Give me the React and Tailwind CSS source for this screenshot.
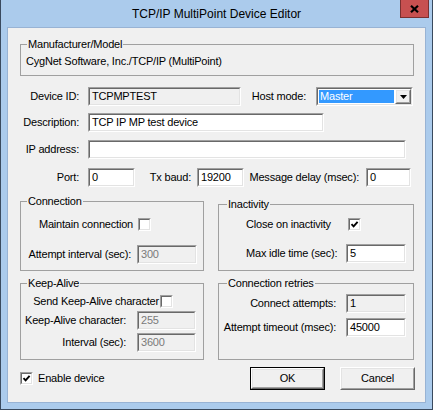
import React from 'react';

function Sunken({ className = '', bg = 'bg-white', children }) {
  return (
    <div className={`border border-t-[#a0a0a0] border-l-[#a0a0a0] border-b-white border-r-white ${className}`}>
      <div className={`h-full border border-t-[#696969] border-l-[#696969] border-b-[#e3e3e3] border-r-[#e3e3e3] ${bg}`}>
        {children}
      </div>
    </div>
  );
}

function Edit({ className = '', value = '', variant = 'normal' }) {
  const bg = variant === 'normal' ? 'bg-white' : 'bg-[#f0f0f0]';
  const color = variant === 'disabled' ? 'text-[#7a7a7a]' : 'text-black';
  return (
    <Sunken className={`h-[19px] ${className}`} bg={bg}>
      <div className={`h-full flex items-center pl-[2px] whitespace-nowrap ${color}`}>{value}</div>
    </Sunken>
  );
}

function Check({ checked = false }) {
  return (
    <Sunken className="w-[13px] h-[13px] shrink-0">
      {checked && (
        <svg width="9" height="9" viewBox="0 0 9 9" className="block">
          <path d="M1.5 4.2 L3.6 6.4 L7.6 1.8" fill="none" stroke="#000" strokeWidth="1.9" />
        </svg>
      )}
    </Sunken>
  );
}

function Raised({ className = '', children }) {
  return (
    <div className={`border border-t-white border-l-white border-b-[#696969] border-r-[#696969] ${className}`}>
      <div className="h-full border border-t-[#e3e3e3] border-l-[#e3e3e3] border-b-[#a0a0a0] border-r-[#a0a0a0] bg-[#f0f0f0] flex items-center justify-center">
        {children}
      </div>
    </div>
  );
}

function Button({ isDefault, className = '', children }) {
  if (isDefault) {
    return (
      <div className={`w-[75px] h-[23px] border border-black ${className}`}>
        <Raised className="h-full">{children}</Raised>
      </div>
    );
  }
  return <Raised className={`w-[75px] h-[23px] ${className}`}>{children}</Raised>;
}

function Group({ title, className = '', labelClass = 'left-[6px]', children }) {
  return (
    <div className={`relative border border-[#a0a0a0] ${className}`}>
      <span className={`absolute -top-[7px] px-[1px] bg-[#f0f0f0] whitespace-nowrap ${labelClass}`}>{title}</span>
      {children}
    </div>
  );
}

export default function App() {
  return (
    <div className="w-[433px] h-[410px] bg-[#abcbec] border-x border-b border-[#3a4a5e] flex flex-col text-[11px] leading-[13px] text-black font-['Liberation_Sans',Arial,sans-serif] select-none">
      {/* title bar */}
      <div className="h-[27px] shrink-0 grid grid-cols-[33px_1fr_33px]">
        <div />
        <div className="flex items-center justify-center pt-[1px] text-[12px] whitespace-nowrap">
          TCP/IP MultiPoint Device Editor
        </div>
        <div>
          <div className="ml-[1px] w-[29px] h-[18px] bg-[#c75050] border-x border-b border-[#7a3030] flex items-center justify-center">
            <svg width="9" height="8" viewBox="0 0 9 8">
              <path d="M1 0.8 L8 7.2 M8 0.8 L1 7.2" stroke="#000" strokeWidth="2.2" />
            </svg>
          </div>
        </div>
      </div>

      {/* client area */}
      <div className="mx-[6px] h-[376px] shrink-0 border border-[#98b3d4] bg-[#f0f0f0] pl-[12px] pr-[11px] tracking-[-0.2px]">
        <Group title="Manufacturer/Model" className="mt-[16px] h-[32px] pl-[5px] pt-[10px]">
          <div className="whitespace-nowrap">CygNet Software, Inc./TCP/IP (MultiPoint)</div>
        </Group>

        <div className="mt-[11px] h-[19px] flex items-center">
          <div className="w-[59px] text-right">Device ID:</div>
          <Edit className="ml-[9px] w-[153px]" value="TCPMPTEST" variant="readonly" />
          <div className="w-[65px] text-right">Host mode:</div>
          <Sunken className="ml-[10px] w-[97px] h-[19px]">
            <div className="h-full flex">
              <div className="flex-1 m-[1px] bg-[#3399ff] text-white flex items-center pl-[1px]">Master</div>
              <Raised className="w-[16px] h-full">
                <svg width="7" height="4" viewBox="0 0 7 4">
                  <path d="M0 0 H7 L3.5 4 Z" fill="#000" />
                </svg>
              </Raised>
            </div>
          </Sunken>
        </div>

        <div className="mt-[7px] h-[19px] flex items-center">
          <div className="w-[59px] text-right">Description:</div>
          <Edit className="ml-[9px] w-[236px]" value="TCP IP MP test device" />
        </div>

        <div className="mt-[8px] h-[19px] flex items-center">
          <div className="w-[59px] text-right">IP address:</div>
          <Edit className="ml-[9px] w-[318px]" value="" />
        </div>

        <div className="mt-[9px] h-[19px] flex items-center">
          <div className="w-[59px] text-right">Port:</div>
          <Edit className="ml-[9px] w-[47px]" value="0" />
          <div className="w-[56px] text-right">Tx baud:</div>
          <Edit className="ml-[6px] w-[47px]" value="19200" />
          <div className="w-[115px] text-right whitespace-nowrap">Message delay (msec):</div>
          <Edit className="ml-[7px] w-[45px]" value="0" />
        </div>

        <div className="flex items-start gap-[14px]">
          {/* left column */}
          <div className="w-[184px] shrink-0">
            <Group title="Connection" className="mt-[14px] h-[70px] pt-[16px]">
              <div className="h-[13px] flex items-center">
                <div className="w-[112px] text-right whitespace-nowrap">Maintain connection</div>
                <div className="ml-[5px]"><Check /></div>
              </div>
              <div className="mt-[14px] h-[19px] flex items-center">
                <div className="w-[110px] text-right whitespace-nowrap">Attempt interval (sec):</div>
                <Edit className="ml-[6px] w-[60px]" value="300" variant="disabled" />
              </div>
            </Group>

            <Group title="Keep-Alive" className="mt-[12px] h-[77px] pt-[11px]">
              <div className="h-[13px] flex items-center">
                <div className="w-[138px] text-right whitespace-nowrap">Send Keep-Alive character</div>
                <div className="ml-[1px]"><Check /></div>
              </div>
              <div className="mt-[3px] h-[19px] flex items-center">
                <div className="w-[105px] text-right whitespace-nowrap">Keep-Alive character:</div>
                <Edit className="ml-[11px] w-[59px]" value="255" variant="disabled" />
              </div>
              <div className="mt-[3px] h-[19px] flex items-center">
                <div className="w-[105px] text-right whitespace-nowrap">Interval (sec):</div>
                <Edit className="ml-[11px] w-[59px]" value="3600" variant="disabled" />
              </div>
            </Group>
          </div>

          {/* right column */}
          <div className="flex-1">
            <Group title="Inactivity" labelClass="left-[8px]" className="mt-[17px] h-[67px] pt-[13px] pl-[27px]">
              <div className="h-[13px] flex items-center">
                <div className="w-[102px] whitespace-nowrap">Close on inactivity</div>
                <Check checked />
              </div>
              <div className="mt-[13px] h-[19px] flex items-center">
                <div className="w-[100px] whitespace-nowrap">Max idle time (sec):</div>
                <Edit className="w-[60px]" value="5" />
              </div>
            </Group>

            <Group title="Connection retries" labelClass="left-[8px]" className="mt-[12px] h-[77px] pt-[10px]">
              <div className="h-[19px] flex items-center">
                <div className="w-[117px] text-right whitespace-nowrap">Connect attempts:</div>
                <Edit className="ml-[10px] w-[60px]" value="1" variant="readonly" />
              </div>
              <div className="mt-[5px] h-[19px] flex items-center">
                <div className="w-[117px] text-right whitespace-nowrap">Attempt timeout (msec):</div>
                <Edit className="ml-[10px] w-[60px]" value="45000" />
              </div>
            </Group>
          </div>
        </div>

        <div className="mt-[7px] h-[23px] flex items-center">
          <Check checked />
          <span className="ml-[5px]">Enable device</span>
          <Button isDefault className="ml-auto">OK</Button>
          <Button className="ml-[15px] mr-[-1px]">Cancel</Button>
        </div>
      </div>
    </div>
  );
}
